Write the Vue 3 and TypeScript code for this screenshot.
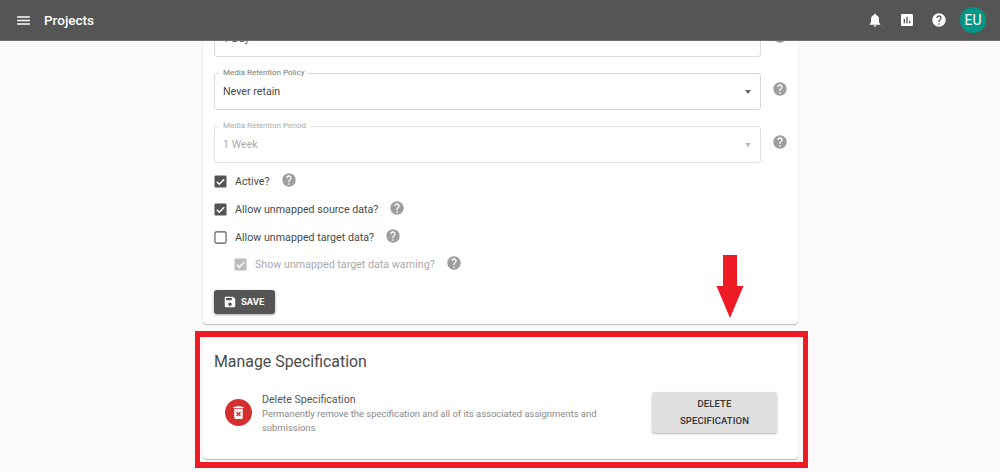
<script setup lang="ts">
const help = 'M12 2C6.48 2 2 6.48 2 12s4.48 10 10 10 10-4.48 10-10S17.52 2 12 2zm1 17h-2v-2h2v2zm2.07-7.75l-.9.92C13.45 12.9 13 13.5 13 15h-2v-.5c0-1.1.45-2.1 1.17-2.83l1.24-1.26c.37-.36.59-.86.59-1.41 0-1.1-.9-2-2-2s-2 .9-2 2H8c0-2.21 1.79-4 4-4s4 1.79 4 4c0 .88-.36 1.68-.93 2.25z'
const fields = [
  { label: 'Schedule Period', value: '1 Day', disabled: false },
  { label: 'Media Retention Policy', value: 'Never retain', disabled: false },
  { label: 'Media Retention Period', value: '1 Week', disabled: true },
]
const checks = [
  { label: 'Active?', checked: true, disabled: false },
  { label: 'Allow unmapped source data?', checked: true, disabled: false },
  { label: 'Allow unmapped target data?', checked: false, disabled: false },
  { label: 'Show unmapped target data warning?', checked: true, disabled: true },
]
</script>

<template>
  <div class="page">
    <header class="bar">
      <svg class="menu" viewBox="0 0 24 24" width="17" height="17"><path d="M3 18h18v-2H3v2zm0-5h18v-2H3v2zm0-7v2h18V6H3z" /></svg>
      <span class="title">Projects</span>
      <span class="spacer"></span>
      <svg class="bar-icon" viewBox="0 0 24 24" width="16" height="16"><path d="M12 22c1.1 0 2-.9 2-2h-4c0 1.1.9 2 2 2zm6-6v-5c0-3.07-1.63-5.64-4.5-6.32V4c0-.83-.67-1.5-1.5-1.5s-1.5.67-1.5 1.5v.68C7.64 5.36 6 7.92 6 11v5l-2 2v1h16v-1l-2-2z" /></svg>
      <svg class="bar-icon" viewBox="0 0 24 24" width="16" height="16"><path d="M19 3H5c-1.1 0-2 .9-2 2v14c0 1.1.9 2 2 2h14c1.1 0 2-.9 2-2V5c0-1.1-.9-2-2-2zM9 17H7v-7h2v7zm4 0h-2V7h2v10zm4 0h-2v-4h2v4z" /></svg>
      <svg class="bar-icon last" viewBox="0 0 24 24" width="16" height="16"><path :d="help" /></svg>
      <span class="avatar">EU</span>
    </header>

    <main class="main">
      <section class="card form-card">
        <div v-for="f in fields" :key="f.label" class="field-row">
          <div class="field" :class="{ disabled: f.disabled }">
            <span class="legend">{{ f.label }}</span>
            <span class="value">{{ f.value }}</span>
            <span class="caret"></span>
          </div>
          <svg class="help" viewBox="0 0 24 24" width="16" height="16"><path :d="help" /></svg>
        </div>

        <div class="checks">
          <div v-for="c in checks" :key="c.label" class="check" :class="{ disabled: c.disabled }">
            <svg class="box" viewBox="0 0 14 14" width="13" height="13">
              <template v-if="c.checked">
                <rect x="0.5" y="0.5" width="13" height="13" rx="1.5" class="box-on" />
                <path d="M3 7.2l2.7 2.7L11 4.6" class="tick" />
              </template>
              <rect v-else x="1" y="1" width="12" height="12" rx="1.5" class="box-off" />
            </svg>
            <span class="check-label">{{ c.label }}</span>
            <svg class="help" viewBox="0 0 24 24" width="16" height="16"><path :d="help" /></svg>
          </div>
        </div>

        <button class="save">
          <svg viewBox="0 0 24 24" width="14" height="14"><path d="M17 3H5c-1.11 0-2 .9-2 2v14c0 1.1.89 2 2 2h14c1.1 0 2-.9 2-2V7l-4-4zm-5 16c-1.66 0-3-1.34-3-3s1.34-3 3-3 3 1.34 3 3-1.34 3-3 3zm3-10H5V5h10v4z" /></svg>
          <span>Save</span>
        </button>
      </section>

      <section class="card manage-card">
        <h2 class="manage-title">Manage Specification</h2>
        <div class="manage-row">
          <span class="danger">
            <svg viewBox="0 0 24 24" width="17" height="17"><path d="M6 19c0 1.1.9 2 2 2h8c1.1 0 2-.9 2-2V7H6v12zm2.46-7.12l1.41-1.41L12 12.59l2.12-2.12 1.41 1.41L13.41 14l2.12 2.12-1.41 1.41L12 15.41l-2.12 2.12-1.41-1.41L10.59 14l-2.13-2.12zM15.5 4l-1-1h-5l-1 1H5v2h14V4z" /></svg>
          </span>
          <div class="manage-text">
            <div class="manage-name">Delete Specification</div>
            <div class="manage-desc">Permanently remove the specification and all of its associated assignments and submissions</div>
          </div>
          <button class="delete">Delete Specification</button>
        </div>
      </section>
    </main>

    <div class="red-box"></div>
    <svg class="red-arrow" viewBox="0 0 28 63" width="28" height="63"><path d="M7 0h14v31h6.5L14 63 .5 31H7z" /></svg>
  </div>
</template>

<style>
html, body { margin: 0; overflow: hidden; }
</style>

<style scoped>
.page {
  position: relative;
  width: 1000px;
  height: 472px;
  overflow: hidden;
  display: flex;
  flex-direction: column;
  background: #fafafa;
  font-family: Roboto, "Liberation Sans", sans-serif;
  color: #4a4a4a;
}
.bar {
  position: relative;
  z-index: 2;
  flex: none;
  height: 41px;
  box-sizing: border-box;
  display: flex;
  align-items: center;
  padding: 0 14px 0 15px;
  background: #555;
  color: #fff;
  border-bottom: 1px solid #6e6e6e;
}
.menu { fill: #fff; }
.title { margin-left: 12px; font-size: 13.5px; font-weight: 500; }
.spacer { flex: 1; }
.bar-icon { fill: #fff; margin-right: 16px; }
.bar-icon.last { margin-right: 13px; }
.avatar {
  width: 26px;
  height: 26px;
  border-radius: 50%;
  background: #009688;
  display: flex;
  align-items: center;
  justify-content: center;
  font-size: 14px;
}
.main {
  flex: none;
  width: 595px;
  margin: -21px 0 0 203px;
  display: flex;
  flex-direction: column;
  gap: 15px;
}
.card {
  background: #fff;
  border-radius: 4px;
  box-shadow: 0 1px 1px rgba(0, 0, 0, 0.25), 0 0 1px rgba(0, 0, 0, 0.12);
  box-sizing: border-box;
}
.form-card { padding: 0 11px 10px; height: 304px; }
.field-row {
  display: flex;
  align-items: center;
  margin-bottom: 16px;
  height: 37px;
}
.field {
  position: relative;
  flex: none;
  width: 547px;
  height: 37px;
  box-sizing: border-box;
  border: 1px solid #d9d9d9;
  border-radius: 3px;
  display: flex;
  align-items: center;
  padding: 0 8px 1px;
  font-size: 10.7px;
}
.legend {
  position: absolute;
  left: 4px;
  top: -6px;
  padding: 0 4px;
  background: #fff;
  font-size: 8px;
  line-height: 10px;
  color: #777;
}
.caret {
  position: absolute;
  right: 9px;
  top: 16px;
  border: 3px solid transparent;
  border-top: 4px solid #666;
  border-bottom: 0;
}
.field.disabled { border-color: #e2e2e2; }
.field.disabled .legend, .field.disabled .value { color: #aaa; }
.field.disabled .caret { border-top-color: #bbb; }
.help { fill: #9e9e9e; flex: none; }
.field-row .help { margin: 0 0 5px 11px; }
.checks { margin-top: -11px; display: flex; flex-direction: column; }
.check {
  display: flex;
  align-items: center;
  height: 27.7px;
  font-size: 10.7px;
}
.box { flex: none; margin-right: 8px; }
.box-on { fill: #555; }
.box-off { fill: #fff; stroke: #555; stroke-width: 1.2; }
.tick { fill: none; stroke: #fff; stroke-width: 1.6; }
.check .help { margin: -3px 0 0 11px; }
.check.disabled { padding-left: 20px; color: #aaa; }
.check.disabled .box-on { fill: #bdbdbd; }
.save {
  margin-top: 11px;
  width: 61px;
  height: 24px;
  padding: 0 0 0 9px;
  border: 0;
  border-radius: 3px;
  background: #555;
  color: #fff;
  font: 700 9.5px Roboto, sans-serif;
  text-transform: uppercase;
  display: flex;
  align-items: center;
  gap: 4px;
  box-shadow: 0 1px 3px rgba(0, 0, 0, 0.35);
}
.save svg { fill: #fff; }
.manage-card { height: 120px; padding: 13px 11px; }
.manage-title { margin: 0; font-size: 15.9px; font-weight: 400; line-height: 20px; color: #4a4a4a; }
.manage-row { display: flex; align-items: center; margin-top: 18px; height: 44px; }
.danger {
  flex: none;
  width: 27px;
  height: 27px;
  margin-left: 11px;
  border-radius: 50%;
  background: #d32f2f;
  display: flex;
  align-items: center;
  justify-content: center;
}
.danger svg { fill: #fff; }
.manage-text { flex: none; width: 350px; margin-left: 10px; padding-top: 4px; }
.manage-name { font-size: 10.6px; line-height: 14px; color: #555; }
.manage-desc { font-size: 9.45px; line-height: 14px; color: #888; }
.delete {
  flex: none;
  width: 125px;
  height: 41px;
  margin-left: 40px;
  padding: 0 20px;
  border: 0;
  border-radius: 3px;
  background: #e0e0e0;
  color: #333;
  font: 500 9.5px/17px Roboto, sans-serif;
  text-transform: uppercase;
  letter-spacing: 0.1px;
  box-shadow: 0 1px 2px rgba(0, 0, 0, 0.3);
}
.red-box {
  position: absolute;
  left: 195px;
  top: 331px;
  width: 613px;
  height: 137px;
  box-sizing: border-box;
  border-width: 6px 5px;
  border-style: solid;
  border-color: #ed1c24;
}
.red-arrow { position: absolute; left: 716px; top: 255px; fill: #ed1c24; }
</style>
